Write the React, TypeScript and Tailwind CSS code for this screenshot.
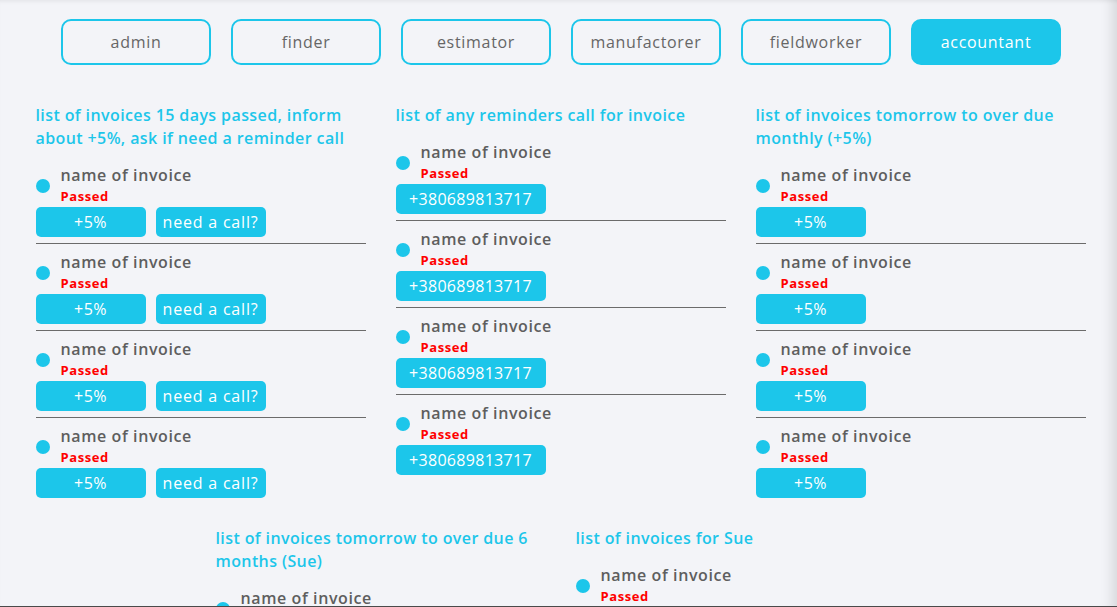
import React from "react";

const CYAN = "bg-[#1cc6ea]";

function Tabs() {
  const tabs = ["admin", "finder", "estimator", "manufactorer", "fieldworker", "accountant"];
  return (
    <div className="flex gap-5 pl-[61px] pt-[19px]">
      {tabs.map((t) => {
        const active = t === "accountant";
        return (
          <button
            key={t}
            className={
              active
                ? "w-[150px] h-[46px] rounded-[10px] border-2 border-[#1cc6ea] bg-[#1cc6ea] text-white text-[16px] tracking-[0.7px]"
                : "w-[150px] h-[46px] rounded-[10px] border-2 border-[#1cc6ea] bg-transparent text-[#666666] text-[16px] tracking-[0.7px]"
            }
          >
            {t}
          </button>
        );
      })}
    </div>
  );
}

type Kind = "fivecall" | "phone" | "five" | "none";

function Item({ kind, last }: { kind: Kind; last: boolean }) {
  return (
    <div className={last ? "pt-[7px] pb-[6px]" : "pt-[7px] pb-[6px] border-b border-[#6b6b6b]"}>
      <div className="flex items-center gap-[11px]">
        <div className={`w-[14px] h-[14px] rounded-full ${CYAN}`} />
        <div className="flex flex-col">
          <span className="text-[16px] leading-[22px] font-semibold text-[#5e5e5e] tracking-[0.6px]">name of invoice</span>
          <span className="text-[13px] leading-[21px] font-bold text-[#ff0000] tracking-[0.6px]">Passed</span>
        </div>
      </div>
      {kind !== "none" && (
        <div className="flex gap-[10px]">
          {kind === "phone" ? (
            <button className="w-[150px] h-[30px] rounded-[5px] bg-[#1cc6ea] text-white text-[16px] tracking-[0.3px]">+380689813717</button>
          ) : (
            <button className="w-[110px] h-[30px] rounded-[5px] bg-[#1cc6ea] text-white text-[16px] tracking-[0.5px]">+5%</button>
          )}
          {kind === "fivecall" && (
            <button className="w-[110px] h-[30px] rounded-[5px] bg-[#1cc6ea] text-white text-[16px] tracking-[0.8px]">need a call?</button>
          )}
        </div>
      )}
    </div>
  );
}

function Section({ title, kind, count }: { title: string; kind: Kind; count: number }) {
  return (
    <div className="w-[330px]">
      <h2 className="text-[16px] leading-[23px] font-semibold text-[#1cc6ea] mb-[7px] tracking-[0.4px]">{title}</h2>
      {Array.from({ length: count }).map((_, i) => (
        <Item key={i} kind={kind} last={i === count - 1} />
      ))}
    </div>
  );
}

export default function App() {
  return (
    <div className="relative h-[607px] overflow-hidden bg-[#f3f4f8] font-['Open_Sans',sans-serif] border-b border-[#4a4a4a] shadow-[inset_-16px_0_14px_-12px_rgba(0,0,0,0.13),inset_0_4px_4px_-3px_rgba(0,0,0,0.08)]">
      <Tabs />
      <div className="ml-[35px] w-[1051px] mt-[39px] flex flex-wrap justify-center gap-x-[30px] gap-y-[23px]">
        <Section title="list of invoices 15 days passed, inform about +5%, ask if need a reminder call" kind="fivecall" count={4} />
        <Section title="list of any reminders call for invoice" kind="phone" count={4} />
        <Section title="list of invoices tomorrow to over due monthly (+5%)" kind="five" count={4} />
        <Section title="list of invoices tomorrow to over due 6 months (Sue)" kind="five" count={4} />
        <Section title="list of invoices for Sue" kind="five" count={4} />
      </div>
    </div>
  );
}
